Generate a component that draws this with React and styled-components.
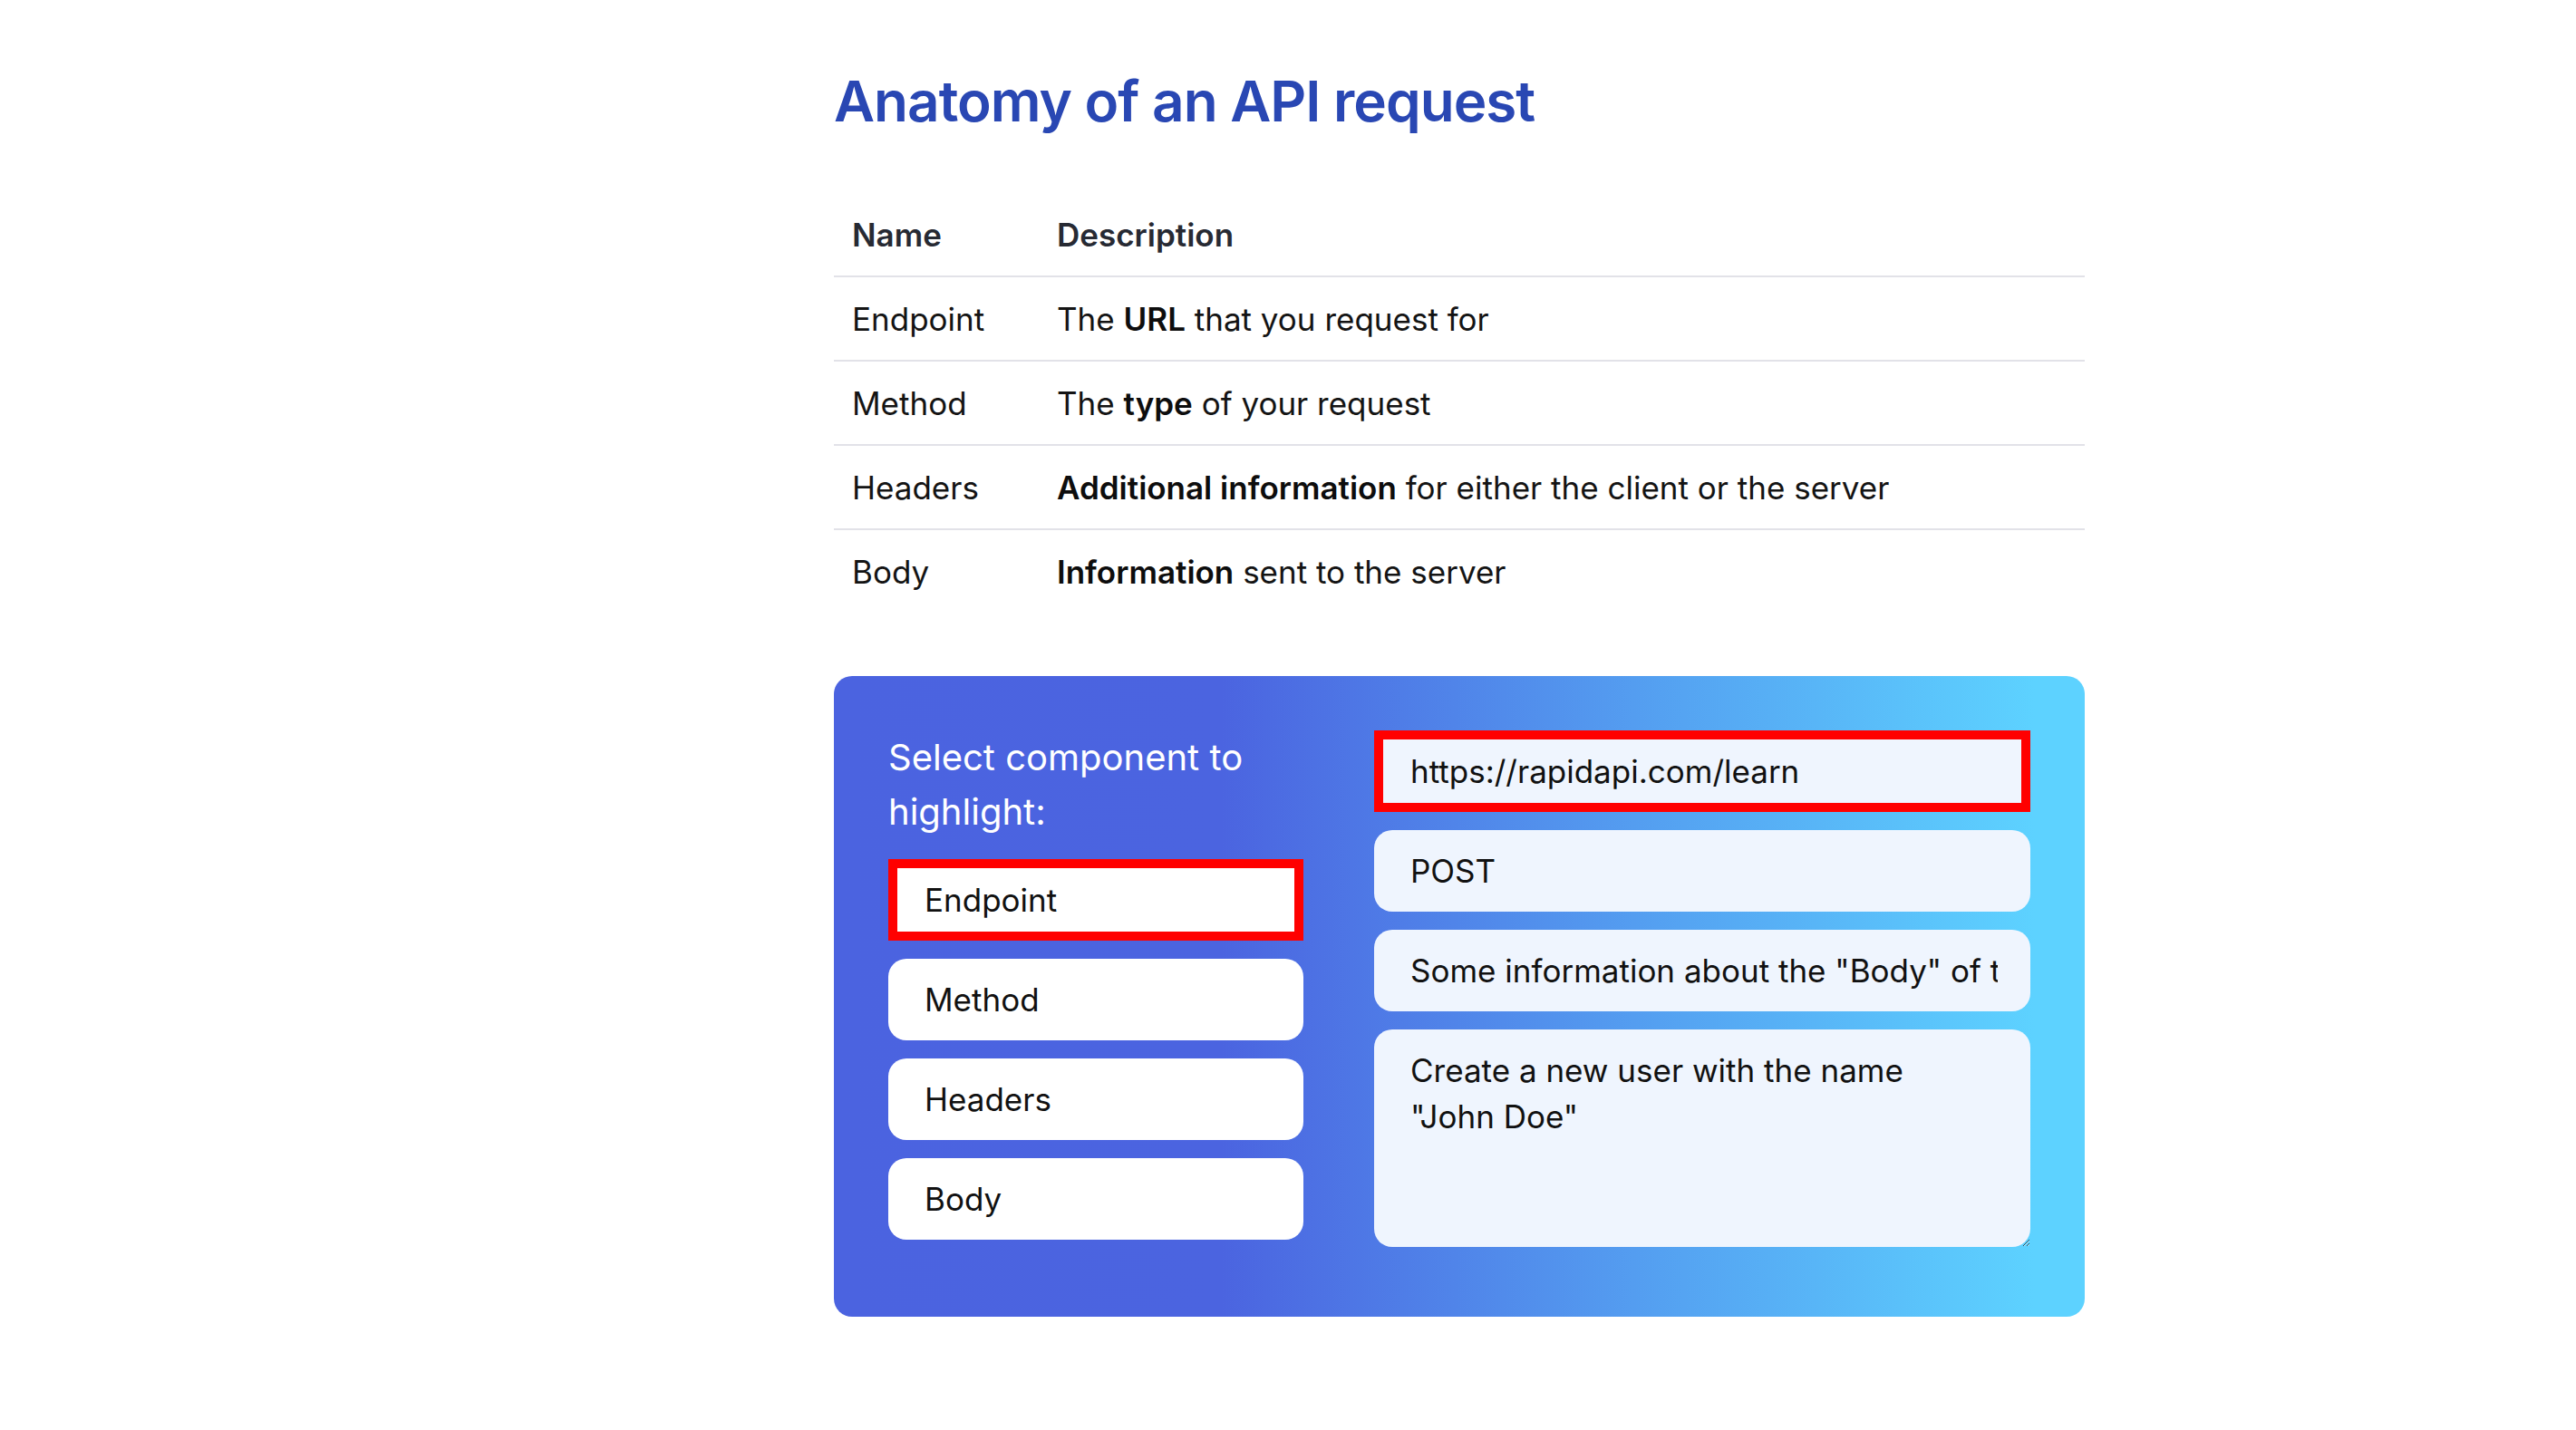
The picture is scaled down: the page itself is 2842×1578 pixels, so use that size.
import React, { useState } from 'react'
import styled, { createGlobalStyle } from 'styled-components'

const GlobalStyle = createGlobalStyle`
  html, body {
    margin: 0;
    padding: 0;
    background: #ffffff;
  }
  body {
    font-family: Inter, "Noto Sans", "Liberation Sans", sans-serif;
    color: #111111;
  }
`

const Page = styled.main`
  width: 1380px;
  margin-left: 920px;
  padding-top: 74px;
  padding-bottom: 120px;
`

const Title = styled.h1`
  margin: 0 0 63px;
  font-size: 62px;
  line-height: 76px;
  font-weight: 600;
  color: #2947b3;
  letter-spacing: -1px;
`

const Table = styled.table`
  width: 100%;
  border-collapse: collapse;
  font-size: 35px;
  line-height: 48px;
`

const HeadCell = styled.th`
  text-align: left;
  font-weight: 600;
  color: #272a33;
  padding: 21.5px 20px;
  width: ${(p) => p.width || 'auto'};
  border-bottom: 2px solid #e2e2e8;
`

const Row = styled.tr`
  border-bottom: ${(p) => (p.last ? 'none' : '2px solid #e2e2e8')};
`

const Cell = styled.td`
  padding: 21.5px 20px;
  color: #141414;

  strong {
    font-weight: 600;
    color: #0d0d0d;
  }
`

const Panel = styled.section`
  margin-top: 70px;
  padding: 60px 60px 57px;
  border-radius: 20px;
  background: linear-gradient(90deg, #4b63e0 0%, #4b64e0 31%, #55a4f2 68%, #5dd2ff 96%);
  display: grid;
  grid-template-columns: 458px 1fr;
  column-gap: 78px;
  align-items: start;
`

const Column = styled.div`
  display: flex;
  flex-direction: column;
`

const Prompt = styled.p`
  margin: 0 0 22px;
  font-size: 40px;
  line-height: 60px;
  color: #ffffff;
`

const Choice = styled.button`
  box-sizing: border-box;
  height: 90px;
  margin-bottom: 20px;
  padding: 0 40px;
  border: none;
  border-radius: ${(p) => (p.active ? '0' : '20px')};
  background: #ffffff;
  box-shadow: ${(p) => (p.active ? 'inset 0 0 0 10px #ff0000' : 'none')};
  font-family: inherit;
  font-size: 35px;
  color: #111111;
  text-align: left;
  cursor: pointer;
`

const Field = styled.input`
  box-sizing: border-box;
  height: 90px;
  margin-bottom: 20px;
  padding: 0 36px 0 40px;
  border: none;
  border-radius: ${(p) => (p.active ? '0' : '20px')};
  background: #eff5fe;
  box-shadow: ${(p) => (p.active ? 'inset 0 0 0 10px #ff0000' : 'none')};
  font-family: inherit;
  font-size: 35px;
  color: #111111;
  outline: none;
`

const Area = styled.textarea`
  box-sizing: border-box;
  height: 240px;
  margin-bottom: 20px;
  padding: 20px 48px 20px 40px;
  border: none;
  border-radius: ${(p) => (p.active ? '0' : '20px')};
  background: #eff5fe;
  box-shadow: ${(p) => (p.active ? 'inset 0 0 0 10px #ff0000' : 'none')};
  font-family: inherit;
  font-size: 35px;
  line-height: 51px;
  color: #111111;
  outline: none;
`

const rows = [
  { name: 'Endpoint', desc: <>The <strong>URL</strong> that you request for</> },
  { name: 'Method', desc: <>The <strong>type</strong> of your request</> },
  { name: 'Headers', desc: <><strong>Additional information</strong> for either the client or the server</> },
  { name: 'Body', desc: <><strong>Information</strong> sent to the server</> },
]

const parts = ['Endpoint', 'Method', 'Headers', 'Body']

export default function App() {
  const [active, setActive] = useState('Endpoint')

  return (
    <>
      <GlobalStyle />
      <Page>
        <Title>Anatomy of an API request</Title>
        <Table>
          <thead>
            <tr>
              <HeadCell width="186px">Name</HeadCell>
              <HeadCell>Description</HeadCell>
            </tr>
          </thead>
          <tbody>
            {rows.map((r, i) => (
              <Row key={r.name} last={i === rows.length - 1}>
                <Cell>{r.name}</Cell>
                <Cell>{r.desc}</Cell>
              </Row>
            ))}
          </tbody>
        </Table>

        <Panel>
          <Column>
            <Prompt>Select component to highlight:</Prompt>
            {parts.map((p) => (
              <Choice key={p} active={active === p} onClick={() => setActive(p)}>
                {p}
              </Choice>
            ))}
          </Column>
          <Column>
            <Field active={active === 'Endpoint'} defaultValue="https://rapidapi.com/learn" />
            <Field active={active === 'Method'} defaultValue="POST" />
            <Field
              active={active === 'Headers'}
              defaultValue={'Some information about the "Body" of the request'}
            />
            <Area active={active === 'Body'} defaultValue={'Create a new user with the name "John Doe"'} />
          </Column>
        </Panel>
      </Page>
    </>
  )
}
